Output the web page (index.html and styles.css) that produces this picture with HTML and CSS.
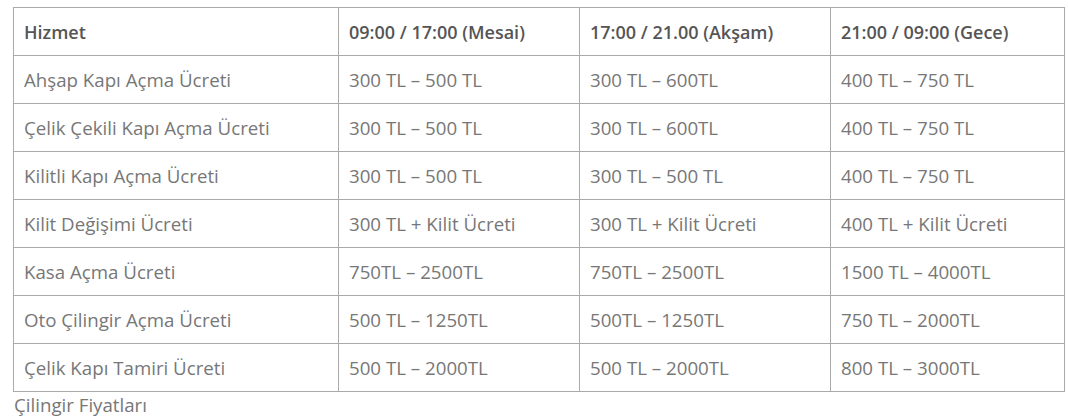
FILE: index.html
```html
<!DOCTYPE html>
<html lang="tr">
<head>
<meta charset="utf-8">
<link rel="stylesheet" href="styles.css">
</head>
<body>
<table class="prices">
  <colgroup>
    <col class="c1"><col class="c2"><col class="c3"><col class="c4">
  </colgroup>
  <thead>
    <tr><th>Hizmet</th><th>09:00 / 17:00 (Mesai)</th><th>17:00 / 21.00 (Akşam)</th><th>21:00 / 09:00 (Gece)</th></tr>
  </thead>
  <tbody>
    <tr><td>Ahşap Kapı Açma Ücreti</td><td>300 TL – 500 TL</td><td>300 TL – 600TL</td><td>400 TL – 750 TL</td></tr>
    <tr><td>Çelik Çekili Kapı Açma Ücreti</td><td>300 TL – 500 TL</td><td>300 TL – 600TL</td><td>400 TL – 750 TL</td></tr>
    <tr><td>Kilitli Kapı Açma Ücreti</td><td>300 TL – 500 TL</td><td>300 TL – 500 TL</td><td>400 TL – 750 TL</td></tr>
    <tr><td>Kilit Değişimi Ücreti</td><td>300 TL + Kilit Ücreti</td><td>300 TL + Kilit Ücreti</td><td>400 TL + Kilit Ücreti</td></tr>
    <tr><td>Kasa Açma Ücreti</td><td>750TL – 2500TL</td><td>750TL – 2500TL</td><td>1500 TL – 4000TL</td></tr>
    <tr><td>Oto Çilingir Açma Ücreti</td><td>500 TL – 1250TL</td><td>500TL – 1250TL</td><td>750 TL – 2000TL</td></tr>
    <tr><td>Çelik Kapı Tamiri Ücreti</td><td>500 TL – 2000TL</td><td>500 TL – 2000TL</td><td>800 TL – 3000TL</td></tr>
  </tbody>
</table>
<p class="caption">Çilingir Fiyatları</p>
</body>
</html>
```
FILE: styles.css
```css
html, body {
  margin: 0;
  padding: 0;
  background: #fff;
}
body {
  padding: 7px 0 0 13px;
  font-family: "Open Sans", "Liberation Sans", sans-serif;
  font-size: 18.7px;
  color: #777;
}
.prices {
  border-collapse: collapse;
  table-layout: fixed;
  width: 1051px;
}
.c1 { width: 325px; }
.c2 { width: 241px; }
.c3 { width: 251px; }
.c4 { width: 234px; }
.prices th,
.prices td {
  border: 1px solid #aaa;
  height: 48px;
  padding: 0 10px;
  text-align: left;
  vertical-align: middle;
  box-sizing: border-box;
  white-space: nowrap;
}
.prices th {
  font-size: 18px;
  font-weight: 600;
  color: #555;
}
.caption {
  margin: 1px 0 0 1px;
  line-height: 24px;
  color: #777;
}
```
